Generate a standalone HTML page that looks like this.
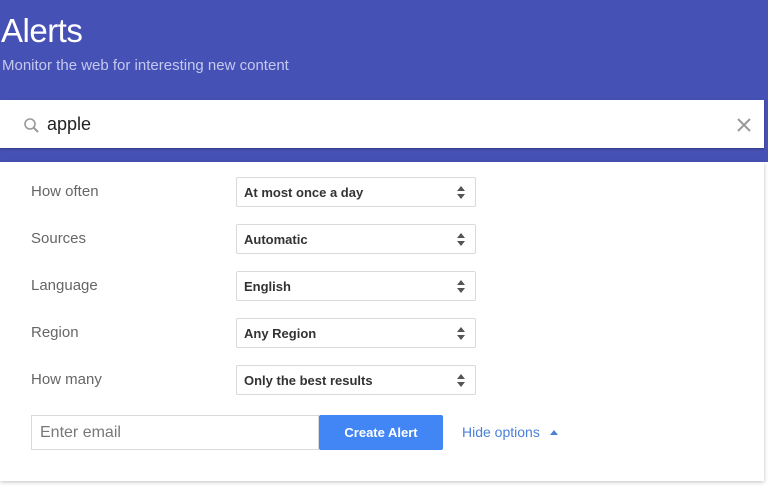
<!DOCTYPE html>
<html><head><style>
body{margin:0;width:768px;height:487px;background:#fff;font-family:"Liberation Sans",sans-serif;position:relative;overflow:hidden}
.hdr{position:absolute;left:0;top:0;width:768px;height:162px;background:#4651b5}
.t{position:absolute;left:1px;top:12px;color:#fff;font-size:33px;letter-spacing:-0.5px}
.st{position:absolute;left:2px;top:57px;color:#c5c9ee;font-size:15px}
.sb{position:absolute;left:0;top:100px;width:764px;height:48px;background:#fff;box-shadow:0 1px 2px rgba(0,0,0,.3)}
.sb .q{position:absolute;left:47px;top:14px;font-size:18px;color:#222}
.card{position:absolute;left:0;top:162px;width:764px;height:319px;background:#fff;box-shadow:0 1px 4px rgba(0,0,0,.25)}
.lbl{position:absolute;left:31px;font-size:15px;color:#666}
.sel{position:absolute;left:236px;width:240px;height:30px;border:1px solid #d9d9d9;border-radius:2px;background:#fff;font-size:13px;font-weight:bold;color:#333;box-sizing:border-box;padding:7px 0 0 7px}
.sel:after{content:"";position:absolute;right:10px;top:8px;border:4px solid transparent;border-bottom:5px solid #555;border-top:0}
.sel:before{content:"";position:absolute;right:10px;top:16px;border:4px solid transparent;border-top:5px solid #555;border-bottom:0}
.em{position:absolute;left:31px;top:415px;width:288px;height:35px;border:1px solid #d9d9d9;box-sizing:border-box;font-size:16px;color:#777;padding:8px 0 0 8px}
.btn{position:absolute;left:319px;top:415px;width:124px;height:35px;background:#4285f4;border-radius:2px;color:#fff;font-size:13px;font-weight:bold;text-align:center;line-height:36px}
.ho{position:absolute;left:462px;top:424px;color:#4a80d8;font-size:14px}
</style></head><body>
<div class="hdr"><div class="t">Alerts</div><div class="st">Monitor the web for interesting new content</div></div>
<div class="card"></div>
<div class="sb">
<svg style="position:absolute;left:23px;top:17px" width="17" height="17" viewBox="0 0 17 17"><circle cx="7" cy="7" r="5" fill="none" stroke="#999" stroke-width="1.6"/><path d="M10.5 10.5L15 15" stroke="#999" stroke-width="2"/></svg>
<div class="q">apple</div>
<svg style="position:absolute;left:737px;top:18px" width="14" height="14" viewBox="0 0 14 14"><path d="M1 1L13 13M13 1L1 13" stroke="#999" stroke-width="2"/></svg>
</div>
<div class="lbl" style="top:183px">How often</div><div class="sel" style="top:177px">At most once a day</div>
<div class="lbl" style="top:230px">Sources</div><div class="sel" style="top:224px">Automatic</div>
<div class="lbl" style="top:277px">Language</div><div class="sel" style="top:271px">English</div>
<div class="lbl" style="top:324px">Region</div><div class="sel" style="top:318px">Any Region</div>
<div class="lbl" style="top:371px">How many</div><div class="sel" style="top:365px">Only the best results</div>
<div class="em">Enter email</div>
<div class="btn">Create Alert</div>
<div class="ho">Hide options <span style="display:inline-block;margin-left:6px;border:4px solid transparent;border-bottom:5px solid #4a80d8;border-top:0;vertical-align:2px"></span></div>
</body></html>
